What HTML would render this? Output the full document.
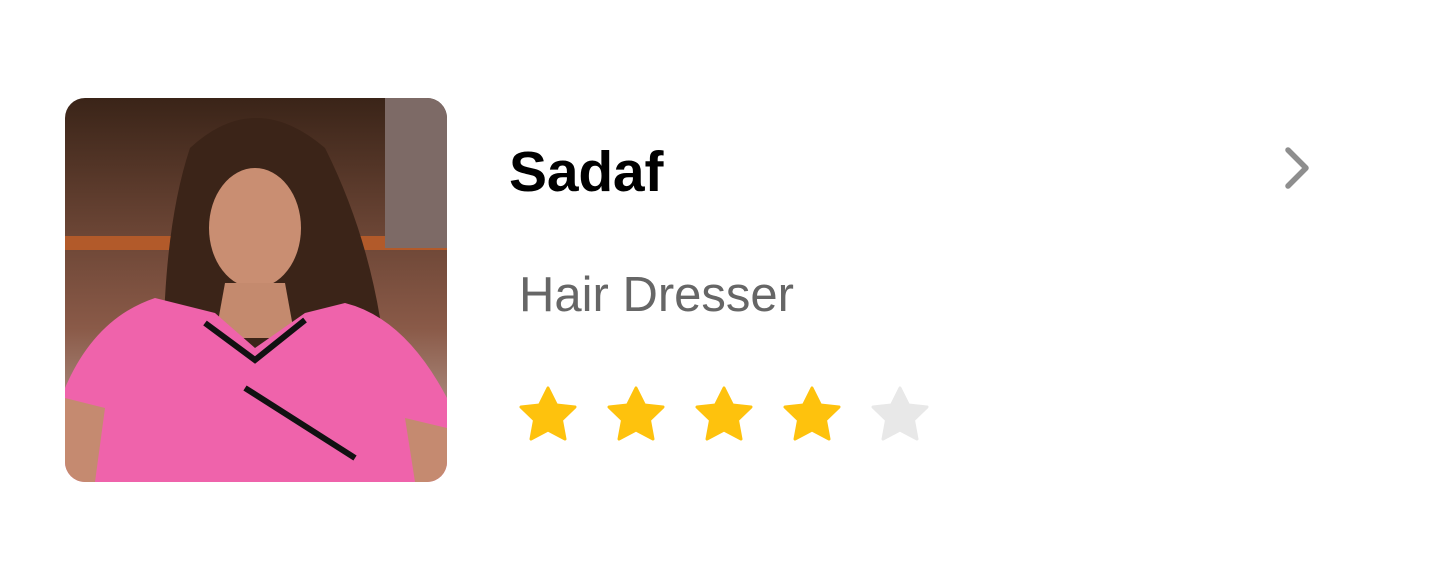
<!DOCTYPE html>
<html><head><style>
body{margin:0;width:1440px;height:577px;background:#fff;position:relative;overflow:hidden;font-family:"Liberation Sans",sans-serif}
.ph{position:absolute;left:65px;top:98px;width:382px;height:384px;border-radius:20px;overflow:hidden}
.n{position:absolute;left:509px;top:139px;font-size:57px;font-weight:bold;color:#000;letter-spacing:-0.2px}
.r{position:absolute;left:519px;top:267px;font-size:49px;color:#666}
</style></head><body>
<div class="ph"><svg width="382" height="384" viewBox="0 0 382 384">
<defs><linearGradient id="bg" x1="0" y1="0" x2="0" y2="1"><stop offset="0" stop-color="#3a2418"/><stop offset=".35" stop-color="#6b4535"/><stop offset=".6" stop-color="#8a5a48"/><stop offset="1" stop-color="#c9b6ae"/></linearGradient></defs>
<rect width="382" height="384" fill="url(#bg)"/>
<rect x="0" y="138" width="382" height="14" fill="#b25a2a"/>
<rect x="320" y="0" width="62" height="150" fill="#7d6a66"/>
<path d="M125 50 Q190 -10 260 50 Q300 130 315 220 Q360 300 340 384 L70 384 Q95 280 100 200 Q105 110 125 50Z" fill="#3b2418"/>
<ellipse cx="190" cy="130" rx="46" ry="60" fill="#c98e72"/>
<path d="M160 185 L220 185 L230 240 L150 240Z" fill="#c48a6e"/>
<path d="M0 290 Q30 220 90 200 L150 215 L190 250 L240 215 L280 205 Q340 220 382 300 L382 384 L0 384Z" fill="#ef63ab"/>
<path d="M140 225 L190 262 L240 222" stroke="#111" stroke-width="6" fill="none"/>
<path d="M180 290 L290 360" stroke="#111" stroke-width="6" fill="none"/>
<path d="M0 300 L40 310 L30 384 L0 384Z" fill="#c58a70"/>
<path d="M340 320 L382 330 L382 384 L350 384Z" fill="#c58a70"/>
</svg></div>
<div class="n">Sadaf</div>
<div class="r">Hair Dresser</div>
<svg style="position:absolute;left:1280px;top:144px" width="36" height="48"><path d="M8 6 L26 24 L8 42" stroke="#8e8e8e" stroke-width="5.5" fill="none" stroke-linecap="round" stroke-linejoin="round"/></svg>
<svg style="position:absolute;left:515px;top:385px" width="420" height="60">
<defs><path id="s" d="M0 -27 L8.5 -10 L27 -8 L13.5 5 L17 24 L0 15 L-17 24 L-13.5 5 L-27 -8 L-8.5 -10Z" stroke-linejoin="round" stroke-width="3"/></defs>
<use href="#s" x="33" y="30" fill="#fec20d" stroke="#fec20d"/>
<use href="#s" x="121" y="30" fill="#fec20d" stroke="#fec20d"/>
<use href="#s" x="209" y="30" fill="#fec20d" stroke="#fec20d"/>
<use href="#s" x="297" y="30" fill="#fec20d" stroke="#fec20d"/>
<use href="#s" x="385" y="30" fill="#e8e8e8" stroke="#e8e8e8"/>
</svg>
</body></html>
